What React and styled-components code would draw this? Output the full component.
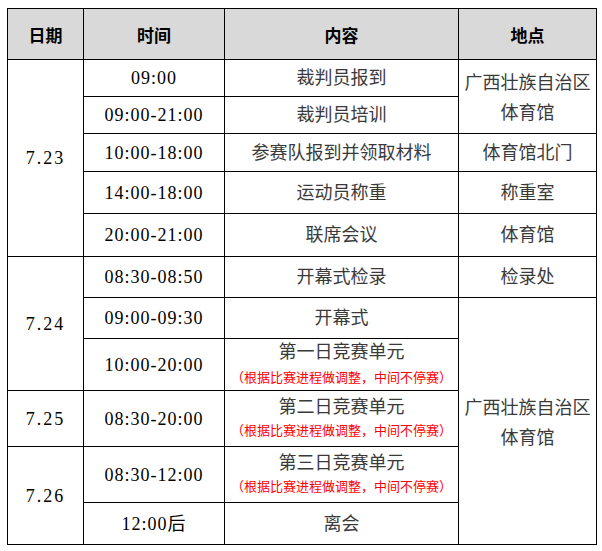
import React from "react";
import styled, { createGlobalStyle } from "styled-components";

const Global = createGlobalStyle`
  html, body { margin: 0; padding: 0; background: #fff; }
  body { font-family: "Liberation Serif", "Noto Sans CJK SC", serif; }
`;

const Page = styled.div`
  padding: 8px 0 0 7px;
`;

const Table = styled.table`
  border-collapse: collapse;
  table-layout: fixed;
  width: 589px;
  font-family: "Liberation Serif", "Noto Sans CJK SC", serif;
  font-size: 18px;
  color: #222;
`;

const Row = styled.tr`
  height: ${(p) => p.$h}px;
`;

const Head = styled.th`
  background: #d9d9d9;
  border: 1px solid #000;
  font-family: "Noto Sans CJK SC", sans-serif;
  font-weight: 700;
  font-size: 17px;
  color: #000;
  text-align: center;
  vertical-align: middle;
  padding: 0;
`;

const Cell = styled.td`
  border: 1px solid #000;
  text-align: center;
  vertical-align: middle;
  padding: 0;
  line-height: 22px;
  letter-spacing: ${(p) => (p.$date ? "2px" : p.$num ? "1px" : "0")};
  color: ${(p) => (p.$num || p.$date ? "#000" : "#3a3a3a")};
`;

const Title = styled.div`
  line-height: ${(p) => p.$lh}px;
`;

const Note = styled.div`
  font-family: "Noto Sans CJK SC", sans-serif;
  font-size: 13px;
  color: #ff0000;
  line-height: ${(p) => p.$lh}px;
`;

const Place = styled.div`
  line-height: 30px;
  padding-top: 3px;
`;

const note = "（根据比赛进程做调整，中间不停赛）";

const Comp = ({ title, lh1, lh2 }) => (
  <>
    <Title $lh={lh1}>{title}</Title>
    <Note $lh={lh2}>{note}</Note>
  </>
);

const Gym = () => (
  <Place>
    广西壮族自治区
    <br />
    体育馆
  </Place>
);

export default function App() {
  return (
    <>
      <Global />
      <Page>
        <Table>
          <colgroup>
            <col style={{ width: 76 }} />
            <col style={{ width: 141 }} />
            <col style={{ width: 234 }} />
            <col style={{ width: 138 }} />
          </colgroup>
          <thead>
            <Row $h={51}>
              <Head>日期</Head>
              <Head>时间</Head>
              <Head>内容</Head>
              <Head>地点</Head>
            </Row>
          </thead>
          <tbody>
            <Row $h={37}>
              <Cell $date rowSpan={5}>7.23</Cell>
              <Cell $num>09:00</Cell>
              <Cell>裁判员报到</Cell>
              <Cell rowSpan={2}>
                <Gym />
              </Cell>
            </Row>
            <Row $h={37}>
              <Cell $num>09:00-21:00</Cell>
              <Cell>裁判员培训</Cell>
            </Row>
            <Row $h={38}>
              <Cell $num>10:00-18:00</Cell>
              <Cell>参赛队报到并领取材料</Cell>
              <Cell>体育馆北门</Cell>
            </Row>
            <Row $h={42}>
              <Cell $num>14:00-18:00</Cell>
              <Cell>运动员称重</Cell>
              <Cell>称重室</Cell>
            </Row>
            <Row $h={43}>
              <Cell $num>20:00-21:00</Cell>
              <Cell>联席会议</Cell>
              <Cell>体育馆</Cell>
            </Row>
            <Row $h={41}>
              <Cell $date rowSpan={3}>7.24</Cell>
              <Cell $num>08:30-08:50</Cell>
              <Cell>开幕式检录</Cell>
              <Cell>检录处</Cell>
            </Row>
            <Row $h={41}>
              <Cell $num>09:00-09:30</Cell>
              <Cell>开幕式</Cell>
              <Cell rowSpan={5}>
                <Gym />
              </Cell>
            </Row>
            <Row $h={52}>
              <Cell $num>10:00-20:00</Cell>
              <Cell>
                <Comp title="第一日竞赛单元" lh1={24} lh2={25} />
              </Cell>
            </Row>
            <Row $h={56}>
              <Cell $date>7.25</Cell>
              <Cell $num>08:30-20:00</Cell>
              <Cell>
                <Comp title="第二日竞赛单元" lh1={23} lh2={22} />
              </Cell>
            </Row>
            <Row $h={56}>
              <Cell $date rowSpan={2}>7.26</Cell>
              <Cell $num>08:30-12:00</Cell>
              <Cell>
                <Comp title="第三日竞赛单元" lh1={23} lh2={22} />
              </Cell>
            </Row>
            <Row $h={42}>
              <Cell $num>12:00后</Cell>
              <Cell>离会</Cell>
            </Row>
          </tbody>
        </Table>
      </Page>
    </>
  );
}
